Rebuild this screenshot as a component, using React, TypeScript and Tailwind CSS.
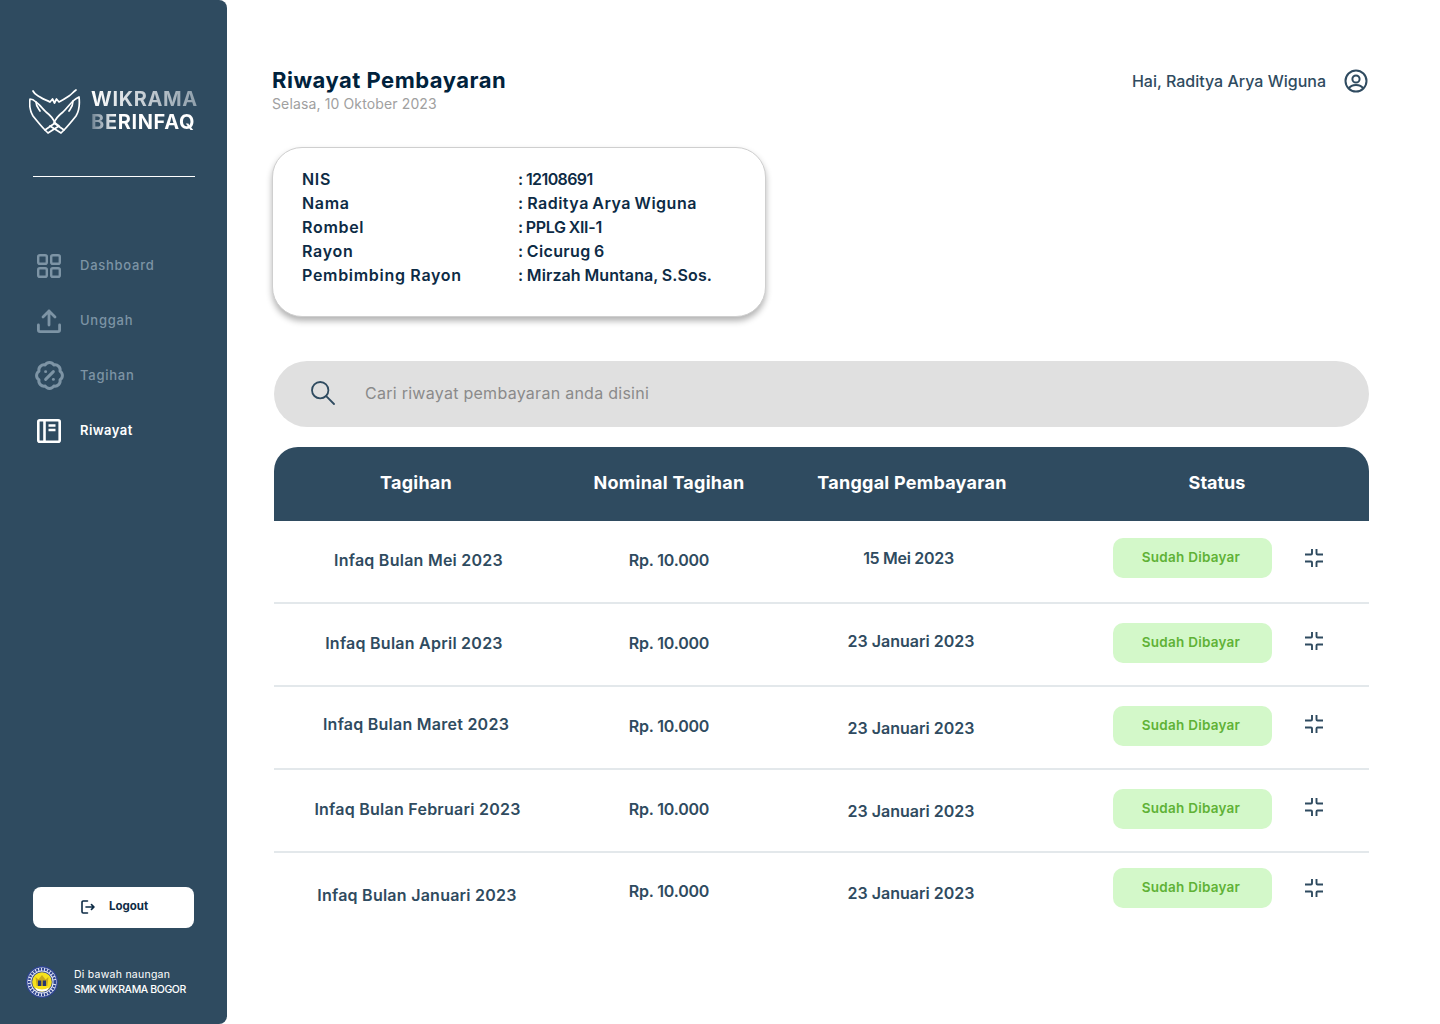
import React from "react";
import { BadgePercent } from "lucide-react";

const Logo = () => (
  <svg width="52" height="46" viewBox="0 0 52 46" fill="none" stroke="white" strokeWidth="1.7" strokeLinejoin="round" strokeLinecap="round" className="shrink-0">
    <path d="M4 3 C6 7 8 7 11 9 C15 12 18 12 21 14 L23.5 11 L25.5 15 L27.5 11 L30 14 C34 12 37 10 40 8 C43 6 44 4 47 2" />
    <path d="M1 11 C0 18 1 23 4 28 C8 33 12 38 16 42 L26 35 C24 30 21 27 17 24 C13 20 10 16 7 14 C5 12 3 11 1 11Z" />
    <path d="M7 14 C7 18 9 20 11 23 M16 42 L19 45 L30 38 L26 35" />
    <path d="M50 9 C51 17 50 23 47 28 C43 33 39 38 35 42 L25 35 C27 30 30 27 34 24 C38 20 41 16 44 13 C46 11 48 10 50 9Z" />
    <path d="M44 13 C44 18 42 20 40 23 M35 42 L32 45 L21 38" />
  </svg>
);

const GridIcon = () => (
  <svg width="24" height="24" viewBox="0 0 24 24" fill="none" stroke="#7d94a5" strokeWidth="2.4">
    <rect x="1.2" y="1.2" width="8.6" height="8.6" rx="1.6" />
    <rect x="14.2" y="1.2" width="8.6" height="8.6" rx="1.6" />
    <rect x="1.2" y="14.2" width="8.6" height="8.6" rx="1.6" />
    <rect x="14.2" y="14.2" width="8.6" height="8.6" rx="1.6" />
  </svg>
);

const UploadIcon = () => (
  <svg width="24" height="24" viewBox="0 0 24 24" fill="none" stroke="#7d94a5" strokeWidth="2.8" strokeLinecap="round" strokeLinejoin="round">
    <path d="M12 16V2M6 8l6-6 6 6" />
    <path d="M1.4 16v5a1.6 1.6 0 0 0 1.6 1.6h18a1.6 1.6 0 0 0 1.6-1.6v-5" />
  </svg>
);

const BookIcon = () => (
  <svg width="24" height="24" viewBox="0 0 24 24" fill="none" stroke="white" strokeWidth="2.6" strokeLinejoin="round">
    <rect x="1.3" y="1.3" width="21.4" height="21.4" rx="1.5" />
    <path d="M7.5 1.5v21" />
    <path d="M11.5 6.5h7M11.5 11h7" strokeWidth="2.4" />
  </svg>
);

const LogoutIcon = () => (
  <svg width="14" height="14" viewBox="0 0 14 14" fill="none" stroke="#0d2b45" strokeWidth="1.6" strokeLinecap="round" strokeLinejoin="round">
    <path d="M6.5 1H2.2A1.2 1.2 0 0 0 1 2.2v9.6A1.2 1.2 0 0 0 2.2 13h4.3" />
    <path d="M5 7h8M10.5 4.6 13 7l-2.5 2.4" />
  </svg>
);

const UserIcon = () => (
  <svg width="24" height="24" viewBox="0 0 24 24" fill="none" stroke="#2f4b60" strokeWidth="2">
    <circle cx="12" cy="12" r="10.5" />
    <circle cx="12" cy="10" r="3.6" />
    <path d="M4.8 19.5c1.5-2.6 4-3.6 7.2-3.6s5.7 1 7.2 3.6" />
  </svg>
);

const SearchIcon = () => (
  <svg width="24" height="24" viewBox="0 0 24 24" fill="none" stroke="#2f4b60" strokeWidth="1.8" strokeLinecap="round">
    <circle cx="9.2" cy="9.2" r="8.2" />
    <path d="M15.2 15.2 23 23" />
  </svg>
);

const ShrinkIcon = () => (
  <svg width="18" height="18" viewBox="0 0 18 18" fill="none" stroke="#2f4b60" strokeWidth="1.9">
    <path d="M7 0v4.5a1 1 0 0 1-1 1H0" />
    <path d="M11.5 0v4.5a1 1 0 0 0 1 1H18" />
    <path d="M7 18v-4.5a1 1 0 0 0-1-1H0" />
    <path d="M11.5 18v-4.5a1 1 0 0 1 1-1H18" />
  </svg>
);

const Seal = () => (
  <svg width="32" height="32" viewBox="0 0 32 32" className="shrink-0">
    <circle cx="16" cy="16" r="16" fill="#2f4590" />
    <circle cx="16" cy="16" r="14.6" fill="#e6e9f4" />
    <circle cx="16" cy="16" r="12.8" fill="none" stroke="#2f4590" strokeWidth="2.6" strokeDasharray="2 1" />
    <circle cx="16" cy="16" r="10.6" fill="#2f4590" />
    <circle cx="16" cy="16" r="9.8" fill="#f6e21c" />
    <path d="M9.5 11l3 2.5L16 9l3.5 4.5 3-2.5-1.2 9H10.7z" fill="#c9a91a" />
    <rect x="12" y="14.5" width="3.2" height="5.5" fill="#24366f" />
    <rect x="16.8" y="14.5" width="3.2" height="5.5" fill="#24366f" />
    <path d="M9 21.5c4 2.5 10 2.5 14 0l-2 3c-3 1.3-7 1.3-10 0z" fill="#fff" />
  </svg>
);

const rows = [
  { name: "Infaq Bulan Mei 2023", date: "15 Mei 2023", a: "w-[286px] pl-[3px] pt-[27px]", b: "pt-[27px]", c: "w-[266px] pr-[5px] pt-[25px] tracking-[-0.3px]", d: "mt-[17px]", e: "mt-[28px]" },
  { name: "Infaq Bulan April 2023", date: "23 Januari 2023", a: "w-[286px] pr-[6px] pt-[27px]", b: "pt-[27px]", c: "w-[266px] pt-[25px]", d: "mt-[19px]", e: "mt-[28px]" },
  { name: "Infaq Bulan Maret 2023", date: "23 Januari 2023", a: "w-[286px] pr-[2px] pt-[25px]", b: "pt-[27px]", c: "w-[266px] pt-[29px]", d: "mt-[19px]", e: "mt-[28px]" },
  { name: "Infaq Bulan Februari 2023", date: "23 Januari 2023", a: "w-[286px] pl-[1px] pt-[27px]", b: "pt-[27px]", c: "w-[266px] pt-[29px]", d: "mt-[19px]", e: "mt-[28px]" },
  { name: "Infaq Bulan Januari 2023", date: "23 Januari 2023", a: "w-[286px] pt-[30px]", b: "pt-[26px]", c: "w-[266px] pt-[28px]", d: "mt-[15px]", e: "mt-[26px]" },
];

const info = [
  ["NIS", ": 12108691", "tracking-[-0.6px]"],
  ["Nama", ": Raditya Arya Wiguna", "tracking-[0.5px] [word-spacing:-1px]"],
  ["Rombel", ": PPLG XII-1", "tracking-[-0.25px] [word-spacing:-1px]"],
  ["Rayon", ": Cicurug 6", "tracking-[0.35px] [word-spacing:-1px]"],
  ["Pembimbing Rayon", ": Mirzah Muntana, S.Sos.", "tracking-[0.1px] [word-spacing:-0.5px]"],
];

const NavItem = ({ icon, label, active }: { icon: React.ReactNode; label: string; active?: boolean }) => (
  <div className="flex h-[55px] items-center pl-[37px]">
    <div className="flex w-[24px] items-center justify-center">{icon}</div>
    <span className={active ? "ml-[19px] text-[13px] font-semibold tracking-[0.45px] text-white" : "ml-[19px] text-[13px] font-medium tracking-[0.75px] text-[#7d94a5]"}>{label}</span>
  </div>
);

export default function App() {
  return (
    <div className="flex h-[1024px] w-[1440px] overflow-hidden bg-white font-['Inter','Liberation_Sans',sans-serif]">
      <aside className="flex h-full w-[227px] shrink-0 flex-col rounded-r-[8px] bg-[#2f4b60]">
        <div className="flex items-start pl-[29px] pt-[88px]">
          <Logo />
          <div className="ml-[10px] text-[20px] font-bold leading-[23px] tracking-[0.65px]">
            <div className="w-fit bg-gradient-to-r from-white to-[#8f9fab] bg-clip-text text-transparent">WIKRAMA</div>
            <div className="w-fit bg-gradient-to-r from-[#6f8393] via-white via-[25%] to-white bg-clip-text text-transparent">BERINFAQ</div>
          </div>
        </div>
        <div className="ml-[33px] mt-[42px] h-px w-[162px] bg-white" />
        <nav className="mt-[61px] flex flex-col">
          <NavItem icon={<GridIcon />} label="Dashboard" />
          <NavItem icon={<UploadIcon />} label="Unggah" />
          <NavItem icon={<BadgePercent size={31} color="#7d94a5" strokeWidth={2.3} className="shrink-0" />} label="Tagihan" />
          <NavItem icon={<BookIcon />} label="Riwayat" active />
        </nav>
        <div className="mt-auto">
          <button className="ml-[33px] flex h-[41px] w-[161px] items-center justify-center gap-[14px] rounded-[8px] bg-white pb-[2px] pl-[2px]">
            <LogoutIcon />
            <span className="text-[11.5px] font-bold text-[#0d2b45]">Logout</span>
          </button>
          <div className="mb-[26px] ml-[26px] mt-[38px] flex items-center gap-[16px]">
            <Seal />
            <div className="text-[10.5px] leading-[15px] text-white">
              <div className="tracking-[0.25px]">Di bawah naungan</div>
              <div className="whitespace-nowrap font-medium tracking-[-0.4px]">SMK WIKRAMA BOGOR</div>
            </div>
          </div>
        </div>
      </aside>

      <main className="flex-1 pl-[45px] pr-[71px]">
        <header className="flex items-start justify-between pt-[67px]">
          <div>
            <h1 className="text-[22px] font-bold leading-[27px] tracking-[0.5px] text-[#00223c]">Riwayat Pembayaran</h1>
            <p className="mt-[1px] text-[14px] leading-[18px] tracking-[0.13px] text-[#a0a0a0]">Selasa, 10 Oktober 2023</p>
          </div>
          <div className="flex h-[28px] items-center gap-[18px] pr-[1px]">
            <span className="text-[16px] font-medium text-[#2f4b60]">Hai, Raditya Arya Wiguna</span>
            <UserIcon />
          </div>
        </header>

        <section className="mt-[34px] h-[170px] w-[494px] rounded-[30px] border border-[#cfcfcf] bg-white pl-[29px] pt-[19px] shadow-[0_4px_6px_rgba(0,0,0,0.3)]">
          {info.map(([k, v, t]) => (
            <div key={k} className="flex text-[16px] font-semibold leading-[24px] text-[#0d2b45]">
              <span className="w-[216px] tracking-[0.7px]">{k}</span>
              <span className={t}>{v}</span>
            </div>
          ))}
        </section>

        <div className="ml-[2px] mt-[44px] flex h-[66px] items-center rounded-[33px] bg-[#e0e0e0] pb-[2px] pl-[37px]">
          <SearchIcon />
          <span className="ml-[30px] text-[16px] tracking-[0.27px] text-[#8a8a8a]">Cari riwayat pembayaran anda disini</span>
        </div>

        <div className="ml-[2px] mt-[20px]">
          <div className="flex h-[74px] items-center rounded-t-[24px] bg-[#2f4b60] pb-[3px] text-[18px] font-bold tracking-[0.25px] text-white">
            <div className="w-[286px] pr-[2px] text-center">Tagihan</div>
            <div className="w-[218px] text-center">Nominal Tagihan</div>
            <div className="w-[266px] pl-[2px] text-center">Tanggal Pembayaran</div>
            <div className="w-[325px] pl-[21px] text-center tracking-normal">Status</div>
          </div>
          {rows.map((r, i) => (
            <div key={r.name} className={i < rows.length - 1 ? "flex h-[83px] items-start border-b-2 border-[#e3e8eb] text-[16px] font-semibold text-[#2f4b60]" : "flex h-[83px] items-start text-[16px] font-semibold text-[#2f4b60]"}>
              <div className={`${r.a} text-center leading-[24px] tracking-[0.25px]`}>{r.name}</div>
              <div className={`${r.b} w-[218px] text-center leading-[24px] tracking-[-0.2px]`}>Rp. 10.000</div>
              <div className={`${r.c} text-center leading-[24px]`}>{r.date}</div>
              <div className={`${r.d} ml-[69px] flex h-[40px] w-[159px] items-center justify-center rounded-[10px] bg-[#d3f8c9] pb-[2px] pr-[3px] text-[13.5px] font-semibold tracking-[0.25px] text-[#5fb236]`}>Sudah Dibayar</div>
              <div className={`${r.e} ml-[33px]`}><ShrinkIcon /></div>
            </div>
          ))}
        </div>
      </main>
    </div>
  );
}
